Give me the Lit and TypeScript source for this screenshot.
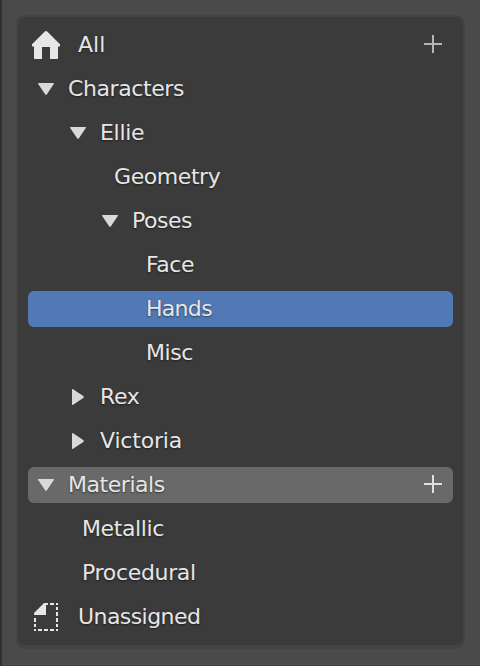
import { LitElement, html, css, svg, nothing } from "lit";
import { customElement } from "lit/decorators.js";
import { classMap } from "lit/directives/class-map.js";

type Icon = "home" | "open" | "closed" | "page" | "none";

interface Row {
  label: string;
  level: number;
  icon: Icon;
  tracking?: number;
  state?: "selected" | "hovered";
  add?: boolean;
}

const rows: Row[] = [
  { label: "All", level: 0, icon: "home", add: true },
  { label: "Characters", level: 0, icon: "open", tracking: -0.4 },
  { label: "Ellie", level: 1, icon: "open", tracking: -0.3 },
  { label: "Geometry", level: 2, icon: "none", tracking: -0.42 },
  { label: "Poses", level: 2, icon: "open", tracking: -0.5 },
  { label: "Face", level: 3, icon: "none", tracking: -0.4 },
  { label: "Hands", level: 3, icon: "none", state: "selected", tracking: -0.7 },
  { label: "Misc", level: 3, icon: "none", tracking: -0.4 },
  { label: "Rex", level: 1, icon: "closed", tracking: -0.4 },
  { label: "Victoria", level: 1, icon: "closed", tracking: -0.18 },
  { label: "Materials", level: 0, icon: "open", state: "hovered", add: true, tracking: -0.45 },
  { label: "Metallic", level: 1, icon: "none", tracking: -0.4 },
  { label: "Procedural", level: 1, icon: "none", tracking: -0.33 },
  { label: "Unassigned", level: 0, icon: "page", tracking: -0.57 },
];

const glyphs = {
  home: svg`<path fill="#e6e6e6" d="M16.8 4.6 Q18 3.4 19.2 4.6 L32 17.2 V19 Q32 19.6 31 19.6 H30 V31 Q30 32 29 32 H22 V20 H14 V32 H7 Q6 32 6 31 V19.6 H5 Q4 19.6 4 19 V17.2 Z"/>`,
  open: svg`<path fill="#d9d9d9" d="M10.8 12 H25.2 Q26.5 12 25.8 13.1 L18.9 23.3 Q18 24.5 17.1 23.3 L10.2 13.1 Q9.5 12 10.8 12 Z"/>`,
  closed: svg`<path fill="#d9d9d9" d="M12 10.8 Q12 9.5 13.1 10.2 L23.3 17.1 Q24.5 18 23.3 18.9 L13.1 25.8 Q12 26.5 12 25.2 Z"/>`,
  page: svg`<g fill="#e6e6e6"><path d="M16 4 H20 V6 H18 V16 H6 V14 Z"/>
    <path d="M22 4h4v2h-4z M28 4h2v2h-2z M28 8h2v3h-2z M28 13h2v4h-2z M28 19h2v4h-2z M28 25h2v3h-2z M28 30h2v2h-2z M6 19h2v4H6z M6 25h2v3H6z M6 30h2v2H6z M10 30h4v2h-4z M16 30h4v2h-4z M22 30h4v2h-4z"/></g>`,
};

@customElement("app-root")
export class AppRoot extends LitElement {
  static styles = css`
    :host {
      display: block;
      box-sizing: border-box;
      height: 666px;
      padding: 15px 15px 16px 14px;
      background: #4a4a4a;
      border-left: 2px solid #303030;
      border-bottom: 1px solid #463f43;
    }
    .panel {
      box-sizing: border-box;
      height: 634px;
      padding: 10px;
      background: #3b3b3b;
      border: 2px solid #434343;
      border-bottom-width: 4px;
      border-radius: 9px;
    }
    .row {
      display: flex;
      align-items: center;
      box-sizing: border-box;
      height: 36px;
      margin-bottom: 8px;
      border-radius: 6px;
      color: #e6e6e6;
      font: 22px/36px "DejaVu Sans", sans-serif;
      text-shadow: 0 1px 2px rgba(0, 0, 0, 0.5);
    }
    .selected { background: #5179b5; }
    .hovered { background: #696969; }
    .glyph { flex: none; width: 36px; height: 36px; }
    .label { flex: 1; margin-left: 4px; }
    .wide .label { margin-left: 14px; }
    .leaf .label { margin-left: 22px; }
    .add { flex: none; width: 18px; height: 18px; margin: 0 11px 2px 0; }
    .add path { fill: #b4b4b4; }
    .hovered .add path { fill: #e0e0e0; }
  `;

  private renderRow(r: Row) {
    const classes = {
      row: true,
      wide: r.icon === "home" || r.icon === "page",
      leaf: r.icon === "none",
      selected: r.state === "selected",
      hovered: r.state === "hovered",
    };
    return html`<div class=${classMap(classes)} style="padding-left:${r.level * 32}px">
      ${r.icon === "none"
        ? nothing
        : html`<svg class="glyph" viewBox="0 0 36 36">${glyphs[r.icon]}</svg>`}
      <span class="label" style="letter-spacing:${r.tracking ?? 0}px">${r.label}</span>
      ${r.add
        ? html`<svg class="add" viewBox="0 0 18 18"><path d="M8 0h2v8h8v2h-8v8H8v-8H0V8h8z" /></svg>`
        : nothing}
    </div>`;
  }

  render() {
    return html`<div class="panel">${rows.map((r) => this.renderRow(r))}</div>`;
  }
}
